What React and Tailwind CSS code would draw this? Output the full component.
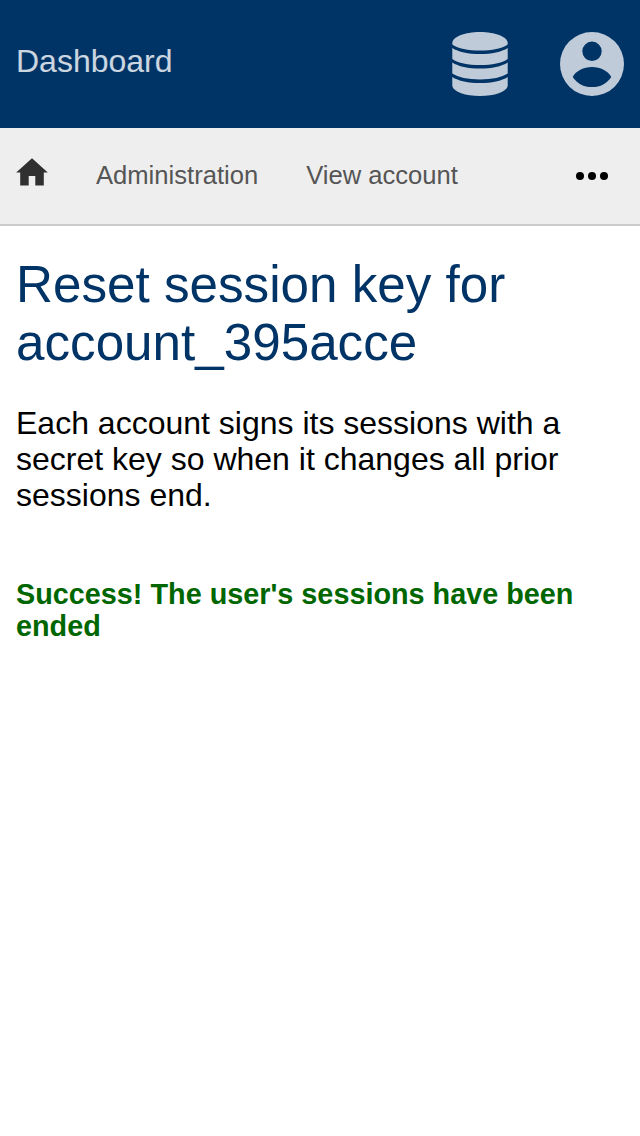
export default function App() {
  return (
    <div className="min-h-screen bg-white font-['Liberation_Sans',Arial,sans-serif] text-black">
      <header className="flex h-32 items-center justify-between bg-[#003366] px-4">
        <a className="-mt-1.5 text-[32px] leading-9 text-white/80">Dashboard</a>
        <div className="flex gap-12">
          <svg className="size-16 fill-white/75" viewBox="0 0 64 64">
            <path d="M4.300 11C4.300 5 16.500 0 32 0s27.700 5 27.700 11V12.600C54 16.600 44 18.600 32 18.600S10 16.600 4.300 12.600z" />
            <path d="M4.300 16c6 3.900 16 6.100 27.700 6.100s21.700-2.200 27.700-6.100v11C54 31 44 33 32 33S10 31 4.300 27z" />
            <path d="M4.300 30.500c6 3.900 16 6.100 27.700 6.100s21.700-2.200 27.700-6.100v11c-5.700 3.900-15.700 5.900-27.700 5.900S10 45.400 4.300 41.500z" />
            <path d="M4.300 45c6 3.900 16 6.100 27.700 6.100s21.700-2.200 27.700-6.100v9C58.500 60 46.500 64 32 64S5.500 60 4.300 54z" />
          </svg>
          <svg className="size-16 fill-white/75" viewBox="0 0 64 64">
            <path fillRule="evenodd" d="M32 0a32 32 0 1 0 0 64 32 32 0 1 0 0-64zm0 9.600a9.700 9.700 0 1 1 0 19.400 9.700 9.700 0 1 1 0-19.400zM32 35c8.500 0 16 4 19.300 9.900C47 51.500 40.500 55 32 55s-15-3.500-19.300-10.100C16 39 23.500 35 32 35z" />
          </svg>
        </div>
      </header>
      <nav className="flex h-[98px] items-center border-b-2 border-[#cccccc] bg-[#eeeeee] px-4 text-[25.6px] leading-8 text-[#555555]">
        <svg className="-mt-2 mr-12 h-7 w-8 fill-[#303030]" viewBox="0 0 32 28">
          <path d="M16 .3 31.800 14.600H27.800V27.600H19.300V18H12.700V27.600H4.200V14.600H.2z" />
        </svg>
        <a className="-mt-0.5 mr-12">Administration</a>
        <a className="-mt-0.5">View account</a>
        <svg className="mr-4 ml-auto h-8 w-8 fill-black" viewBox="0 0 32 32">
          <circle cx="4" cy="16" r="4" /><circle cx="16" cy="16" r="4" /><circle cx="28" cy="16" r="4" />
        </svg>
      </nav>
      <main className="px-4">
        <h1 className="pt-[30px] text-[51.2px] leading-[58px] text-[#003366]">Reset session key for account_395acce</h1>
        <p className="mt-[33px] text-[32px] leading-9">Each account signs its sessions with a secret key so when it changes all prior sessions end.</p>
        <p className="mt-[65px] text-[28.8px] leading-8 font-bold text-[#006600]">Success! The user's sessions have been ended</p>
      </main>
    </div>
  )
}
